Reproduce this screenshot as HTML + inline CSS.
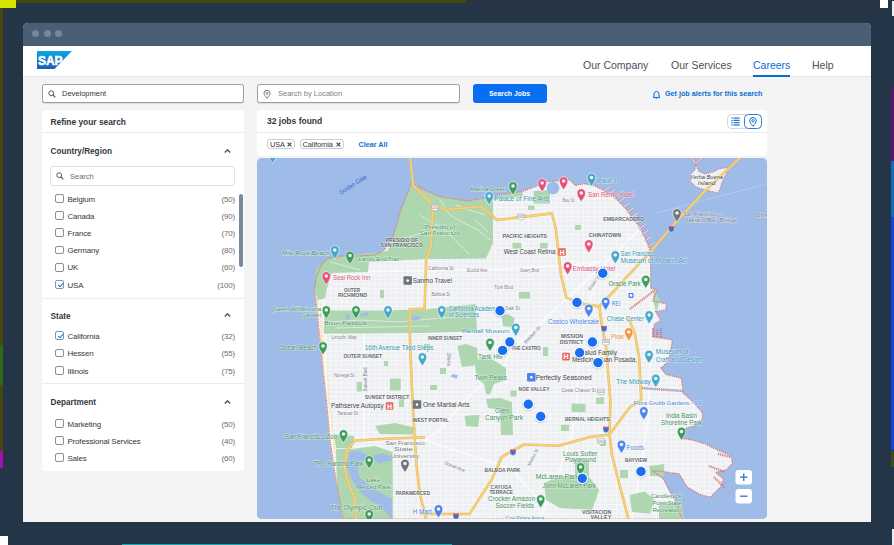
<!DOCTYPE html>
<html><head><meta charset="utf-8">
<style>
*{margin:0;padding:0;box-sizing:border-box}
html,body{width:894px;height:545px;overflow:hidden;background:#233547;font-family:"Liberation Sans",sans-serif;position:relative}
.abs{position:absolute}
#win{position:absolute;left:23px;top:23px;width:848px;height:499px;background:#f4f4f4;border-radius:5px 5px 0 0;overflow:hidden}
#tbar{position:absolute;left:0;top:0;width:848px;height:23px;background:#4a5e75}
.dot{position:absolute;top:7.3px;width:7px;height:7px;border-radius:50%;background:#74879d}
#hdr{position:absolute;left:0;top:23px;width:848px;height:31px;background:#fff;border-bottom:1px solid #e5e5e5}
.nav{position:absolute;top:13px;font-size:10.5px;color:#4b4f55;white-space:nowrap}
.inp{position:absolute;top:61px;height:19px;background:#fff;border:1px solid #9a9ea3;border-radius:2.5px;box-shadow:0 0.5px 0 #c5c8cc}
.card{position:absolute;background:#fff;border-radius:4px}
.t{position:absolute;white-space:nowrap}
.row{position:absolute;left:12px;width:181px;height:10px;font-size:7.9px;letter-spacing:-0.14px;color:#32363a}
.cb{position:absolute;left:1px;top:-0.6px;width:9px;height:8.8px;border:1px solid #8a8d92;border-radius:2px;background:#fff}
.rl{position:absolute;left:13.5px;top:0.2px;line-height:9px}
.rc{position:absolute;right:0;top:0.2px;line-height:9px;color:#6a6d70}
.sh{position:absolute;left:8.5px;font-size:8.2px;font-weight:700;color:#33373c;white-space:nowrap}
.chev{position:absolute;left:182px;width:7px;height:4px}
.ck{border-color:#7f95b3}.ck::after{content:"";position:absolute;left:2.6px;top:0.6px;width:2.2px;height:4.4px;border-right:0.9px solid #0a6ed1;border-bottom:0.9px solid #0a6ed1;transform:rotate(40deg)}
.chip{height:10px;border:1px solid #c9cdd2;border-radius:3px;font-size:7.4px;letter-spacing:-0.1px;color:#32363a;white-space:nowrap}.chip span{position:absolute;left:1.6px;top:0.2px;line-height:8px}.chip i{position:absolute;right:1.5px;top:0.3px;font-style:normal;font-size:6px;line-height:8px;color:#45484c}
.div{position:absolute;left:0;width:202px;height:1px;background:#ececec}
</style></head><body>
<!-- edge strips -->
<div class="abs" style="left:0;top:0;width:16px;height:8px;background:#d4e400"></div>
<div class="abs" style="left:16px;top:0;width:450px;height:2.5px;background:#3e4a12"></div>
<div class="abs" style="left:466px;top:0;width:414px;height:2px;background:#2b323d"></div>
<div class="abs" style="left:880px;top:0;width:8px;height:8px;background:#fff"></div>
<div class="abs" style="left:892px;top:1px;width:2px;height:15px;background:#e8eef4"></div>
<div class="abs" style="left:0;top:8px;width:3px;height:337px;background:#45470f"></div>
<div class="abs" style="left:0;top:345px;width:3px;height:40px;background:#2f6a12"></div>
<div class="abs" style="left:0;top:385px;width:3px;height:66px;background:#45470f"></div>
<div class="abs" style="left:0;top:451px;width:3px;height:17px;background:#a212a8"></div>
<div class="abs" style="left:0;top:536px;width:8px;height:9px;background:#fff"></div>
<div class="abs" style="left:122px;top:543.5px;width:330px;height:1.5px;background:#14a9b2"></div>
<div class="abs" style="left:890.5px;top:88.8px;width:3.5px;height:72px;background:#5c1670"></div>
<div class="abs" style="left:890.5px;top:160.8px;width:3.5px;height:56px;background:#0f6cb8"></div>
<div class="abs" style="left:890.5px;top:216.8px;width:3.5px;height:233.7px;background:#1242e0"></div>
<div class="abs" style="left:890.5px;top:450.5px;width:3.5px;height:16px;background:#3c4a20"></div>
<div class="abs" style="left:892px;top:529px;width:2px;height:16px;background:#e9edf1"></div>
<div id="win">
  <div id="tbar">
    <div class="dot" style="left:9px"></div>
    <div class="dot" style="left:20.5px"></div>
    <div class="dot" style="left:32px"></div>
  </div>
  <div id="hdr">
    <!-- SAP logo -->
    <svg class="abs" style="left:14px;top:5px" width="35" height="18" viewBox="0 0 35 18">
      <defs><linearGradient id="sapg" x1="0" y1="0" x2="0" y2="1"><stop offset="0" stop-color="#0aa6e8"/><stop offset="1" stop-color="#1d5cb2"/></linearGradient></defs>
      <polygon points="0,0 35,0 17.5,18 0,18" fill="url(#sapg)"/>
      <text x="1" y="14.3" font-family="Liberation Sans" font-weight="700" font-size="13.5" fill="#fff" stroke="#fff" stroke-width="0.6" textLength="24.5" lengthAdjust="spacingAndGlyphs">SAP</text>
    </svg>
    <div class="nav" style="left:560px">Our Company</div>
    <div class="nav" style="left:648px">Our Services</div>
    <div class="nav" style="left:730px;color:#0a6ed1">Careers</div>
    <div class="abs" style="left:730px;top:29px;width:37px;height:2px;background:#0a6ed1"></div>
    <div class="nav" style="left:789px">Help</div>
  </div>

  <!-- search inputs -->
  <div class="inp" style="left:19px;width:202px">
    <svg class="abs" style="left:5px;top:5px" width="8" height="8" viewBox="0 0 8 8"><circle cx="3.2" cy="3.2" r="2.4" fill="none" stroke="#55595e" stroke-width="1"/><line x1="5" y1="5" x2="7.3" y2="7.3" stroke="#55595e" stroke-width="1.1"/></svg>
    <div class="t" style="left:19px;top:4px;font-size:7.5px;color:#32363a">Development</div>
  </div>
  <div class="inp" style="left:234px;width:203px">
    <svg class="abs" style="left:5px;top:4.5px" width="8" height="9" viewBox="0 0 8 9"><path d="M4 8.3 C2 6 1 4.6 1 3.3 A3 3 0 0 1 7 3.3 C7 4.6 6 6 4 8.3Z" fill="none" stroke="#6a6d70" stroke-width="0.9"/><circle cx="4" cy="3.4" r="1" fill="none" stroke="#6a6d70" stroke-width="0.8"/></svg>
    <div class="t" style="left:20px;top:4px;font-size:7.5px;color:#7b7e82">Search by Location</div>
  </div>
  <div class="abs" style="left:450px;top:61px;width:74px;height:19px;background:#0a6ef2;border-radius:3px">
    <div class="t" style="left:16px;top:5.8px;font-size:6.9px;font-weight:700;color:#fff">Search Jobs</div>
  </div>
  <svg class="abs" style="left:629px;top:67px" width="9" height="9" viewBox="0 0 9 9"><path d="M2 6.5 V4 A2.5 2.5 0 0 1 7 4 V6.5 L8 7.4 H1 Z" fill="none" stroke="#0a6ed1" stroke-width="1"/><path d="M3.6 8.2 H5.4" stroke="#0a6ed1" stroke-width="1"/></svg>
  <div class="t" style="left:642px;top:66px;font-size:7.2px;font-weight:700;color:#0a6ed1">Get job alerts for this search</div>

  <!-- left card -->
  <div class="card" style="left:19px;top:87px;width:202px;height:361px">
    <div class="sh" style="top:7.3px;font-size:8.4px">Refine your search</div>
    <div class="div" style="top:22px"></div>
    <div class="sh" style="top:36.5px">Country/Region</div>
    <svg class="chev" style="top:38.5px" viewBox="0 0 7 4"><path d="M0.8 3.4 L3.5 0.8 L6.2 3.4" fill="none" stroke="#505458" stroke-width="1.4"/></svg>
    <div class="abs" style="left:8px;top:56px;width:185px;height:19.5px;border:1px solid #e3e3e3;border-radius:3px">
      <svg class="abs" style="left:5px;top:5px" width="8" height="8" viewBox="0 0 8 8"><circle cx="3.2" cy="3.2" r="2.4" fill="none" stroke="#55595e" stroke-width="1"/><line x1="5" y1="5" x2="7.3" y2="7.3" stroke="#55595e" stroke-width="1.1"/></svg>
      <div class="t" style="left:19px;top:4.5px;font-size:7.5px;color:#6a6d70">Search</div>
    </div>
    <div class="abs" style="left:197px;top:84.3px;width:4px;height:72.3px;background:#778a9e;border-radius:2px"></div>
    <div class="row" style="top:84.5px"><div class="cb"></div><div class="rl">Belgium</div><div class="rc">(50)</div></div>
    <div class="row" style="top:101.7px"><div class="cb"></div><div class="rl">Canada</div><div class="rc">(90)</div></div>
    <div class="row" style="top:118.9px"><div class="cb"></div><div class="rl">France</div><div class="rc">(70)</div></div>
    <div class="row" style="top:136.1px"><div class="cb"></div><div class="rl">Germany</div><div class="rc">(80)</div></div>
    <div class="row" style="top:153.3px"><div class="cb"></div><div class="rl">UK</div><div class="rc">(60)</div></div>
    <div class="row" style="top:170.5px"><div class="cb ck"></div><div class="rl">USA</div><div class="rc">(100)</div></div>
    <div class="div" style="top:187.5px"></div>
    <div class="sh" style="top:201.6px">State</div>
    <svg class="chev" style="top:202.8px" viewBox="0 0 7 4"><path d="M0.8 3.4 L3.5 0.8 L6.2 3.4" fill="none" stroke="#505458" stroke-width="1.4"/></svg>
    <div class="row" style="top:222px"><div class="cb ck"></div><div class="rl">California</div><div class="rc">(32)</div></div>
    <div class="row" style="top:239.2px"><div class="cb"></div><div class="rl">Hessen</div><div class="rc">(55)</div></div>
    <div class="row" style="top:256.4px"><div class="cb"></div><div class="rl">Illinois</div><div class="rc">(75)</div></div>
    <div class="div" style="top:273.4px"></div>
    <div class="sh" style="top:288.3px">Department</div>
    <svg class="chev" style="top:289.6px" viewBox="0 0 7 4"><path d="M0.8 3.4 L3.5 0.8 L6.2 3.4" fill="none" stroke="#505458" stroke-width="1.4"/></svg>
    <div class="row" style="top:309.6px"><div class="cb"></div><div class="rl">Marketing</div><div class="rc">(50)</div></div>
    <div class="row" style="top:326.8px"><div class="cb"></div><div class="rl">Professional Services</div><div class="rc">(40)</div></div>
    <div class="row" style="top:344px"><div class="cb"></div><div class="rl">Sales</div><div class="rc">(60)</div></div>
  </div>

  <!-- jobs card -->
  <div class="card" style="left:234px;top:87px;width:510px;height:46px">
    <div class="t" style="left:10px;top:6.4px;font-size:8.5px;font-weight:700;color:#33373c">32 jobs found</div>
    <div class="div" style="top:22px;width:510px"></div>
    <div class="abs chip" style="left:10.4px;top:29.4px;width:28px"><span>USA</span><svg style="position:absolute;right:2.2px;top:2px" width="5" height="5" viewBox="0 0 5 5"><path d="M0.6 0.6 L4.4 4.4 M4.4 0.6 L0.6 4.4" stroke="#3d4045" stroke-width="1.05"/></svg></div>
    <div class="abs chip" style="left:43px;top:29.4px;width:44px"><span>California</span><svg style="position:absolute;right:2.2px;top:2px" width="5" height="5" viewBox="0 0 5 5"><path d="M0.6 0.6 L4.4 4.4 M4.4 0.6 L0.6 4.4" stroke="#3d4045" stroke-width="1.05"/></svg></div>
    <div class="t" style="left:101.5px;top:30px;font-size:7.2px;font-weight:700;color:#0a6ed1">Clear All</div>
    <div class="abs" style="left:470.4px;top:4px;width:34.5px;height:15px;border:1px solid #cfd6e0;border-radius:4.5px"></div>
    <svg class="abs" style="left:474px;top:7px" width="10" height="9" viewBox="0 0 10 9"><g fill="#0a6ed1"><circle cx="1" cy="1.1" r="0.75"/><circle cx="1" cy="3.4" r="0.75"/><circle cx="1" cy="5.7" r="0.75"/><circle cx="1" cy="8" r="0.75"/><rect x="2.6" y="0.5" width="6" height="1.15"/><rect x="2.6" y="2.8" width="6" height="1.15"/><rect x="2.6" y="5.1" width="6" height="1.15"/><rect x="2.6" y="7.4" width="6" height="1.15"/></g></svg>
    <div class="abs" style="left:487.3px;top:4px;width:17.6px;height:15px;border:1px solid #2f7fd6;border-radius:4.5px;background:#fff"></div>
    <svg class="abs" style="left:492px;top:6.5px" width="8" height="10" viewBox="0 0 8 10"><path d="M4 9.2 C1.8 6.8 0.7 5.2 0.7 3.8 A3.3 3.3 0 0 1 7.3 3.8 C7.3 5.2 6.2 6.8 4 9.2Z" fill="none" stroke="#0a6ed1" stroke-width="1"/><circle cx="4" cy="3.8" r="1.2" fill="none" stroke="#0a6ed1" stroke-width="0.9"/></svg>
  </div>

  <!-- map -->
  <div id="map" class="abs" style="left:234px;top:135px;width:510px;height:361px;border-radius:5px;overflow:hidden;background:#9fbbe8">
<svg class="abs" style="left:0;top:0" width="510" height="361" viewBox="257 158 510 361">
<rect x="257" y="158" width="510" height="361" fill="#9fbbe8"/>
<polygon points="343,519 336,480 330,440 326.5,400 323,370 320,340 317,310 314.5,290 316,278 319,270 322,264 327.7,258.5 343,256 360,256 374,255 380,252.5 385,249.2 393.2,236 399.8,212.9 411.4,183.2 413,183.2 420,188 440,196.8 467.5,201 486,197.5 495,195.4 522.5,191.3 536,186.2 547,181.5 562.6,180.7 570.5,180 575,185.4 584.6,183.8 594,185.4 601.8,189.3 614.3,197 625.3,208 634.7,220.6 640,227 649.4,247.4 650.6,262.6 650.6,288.3 657,289.6 653,301 666,303.7 666,310 655.7,311.4 660.8,320.4 654.4,324.3 653,337 663.4,338.4 672.4,339.7 671,348.7 668.6,361.5 660.8,368 666,374.4 681.4,378.3 682.7,388.5 683,393 692,400.8 702.5,412.6 702.5,419 696,425.6 685.6,428.2 683,438.6 692,440 705,443.8 718,450.3 731,455.6 732.5,463.4 726,469.9 715.6,472.5 723.4,479 720.8,486.8 710.3,497.2 700,494.6 687,486.8 679,473.8 660.8,471.2 653,471.2 663.4,479 668.7,489.4 676.5,502.5 681.7,519" fill="#edeff2"/>
<polygon points="695.7,163.3 694.9,169.9 690.7,174 690.7,181.4 696.5,187.2 704.8,189.7 718,193 720.5,188 722,182.3 726.2,174 727,167.4 718.8,169 712.2,172.3 704.8,174 699,171.5 696.5,166.6" fill="#edeff2"/>
<polyline points="317,290 319,310 322,340 325,370 328.5,400 332,440 338,480 345,519" fill="none" stroke="#f3e7c8" stroke-width="5"/>
<defs><pattern id="grid" width="5.5" height="4.5" patternUnits="userSpaceOnUse"><path d="M0 0.4H5.5M0.4 0V4.5" stroke="#f8f9fa" stroke-width="0.8"/></pattern><clipPath id="landclip"><polygon points="343,519 336,480 330,440 326.5,400 323,370 320,340 317,310 314.5,290 316,278 319,270 322,264 327.7,258.5 343,256 360,256 374,255 380,252.5 385,249.2 393.2,236 399.8,212.9 411.4,183.2 413,183.2 420,188 440,196.8 467.5,201 486,197.5 495,195.4 522.5,191.3 536,186.2 547,181.5 562.6,180.7 570.5,180 575,185.4 584.6,183.8 594,185.4 601.8,189.3 614.3,197 625.3,208 634.7,220.6 640,227 649.4,247.4 650.6,262.6 650.6,288.3 657,289.6 653,301 666,303.7 666,310 655.7,311.4 660.8,320.4 654.4,324.3 653,337 663.4,338.4 672.4,339.7 671,348.7 668.6,361.5 660.8,368 666,374.4 681.4,378.3 682.7,388.5 683,393 692,400.8 702.5,412.6 702.5,419 696,425.6 685.6,428.2 683,438.6 692,440 705,443.8 718,450.3 731,455.6 732.5,463.4 726,469.9 715.6,472.5 723.4,479 720.8,486.8 710.3,497.2 700,494.6 687,486.8 679,473.8 660.8,471.2 653,471.2 663.4,479 668.7,489.4 676.5,502.5 681.7,519"/></clipPath></defs>
<rect x="257" y="158" width="510" height="361" fill="url(#grid)" clip-path="url(#landclip)"/>
<polyline points="645,224 600,268 560,305 520,342 510,352 505,365" fill="none" stroke="#fbfbfc" stroke-width="1.6" clip-path="url(#landclip)"/>
<polyline points="330,272 420,271 500,269 560,266 600,262" fill="none" stroke="#fbfbfc" stroke-width="1.6" clip-path="url(#landclip)"/>
<polyline points="323,334 400,333 476,332 520,331" fill="none" stroke="#fbfbfc" stroke-width="1.6" clip-path="url(#landclip)"/>
<polyline points="364,334 364,438" fill="none" stroke="#fbfbfc" stroke-width="1.6" clip-path="url(#landclip)"/>
<polyline points="322,260 327,400 335,470 342,519" fill="none" stroke="#fbfbfc" stroke-width="1.6" clip-path="url(#landclip)"/>
<polyline points="600,268 585,320 578,360 576,420 560,470 540,519" fill="none" stroke="#fbfbfc" stroke-width="1.6" clip-path="url(#landclip)"/>
<polyline points="652,300 650,360 648,420 640,470 632,519" fill="none" stroke="#fbfbfc" stroke-width="1.6" clip-path="url(#landclip)"/>
<polyline points="425,440 470,455 510,468 540,500" fill="none" stroke="#fbfbfc" stroke-width="1.6" clip-path="url(#landclip)"/>
<polyline points="505,365 470,395 440,430 426,440" fill="none" stroke="#fbfbfc" stroke-width="1.6" clip-path="url(#landclip)"/>
<polyline points="561,275 600,262" fill="none" stroke="#fbfbfc" stroke-width="1.6" clip-path="url(#landclip)"/>
<polygon points="411.4,183.2 413,183.2 420,188 440,196.8 467.5,201 486,197.5 493,196 493,243 486,258.5 446,259 426,259 400,257 387,252 393.2,236 399.8,212.9" fill="#aed7b1"/>
<polygon points="327.7,258.5 343,256 360,254 387,251 426,259 369,262 368,272 332,273 327,288 325.2,298.2 317.8,300 314.2,287.2 316,270.7 319,266" fill="#aed7b1"/>
<polygon points="493,196 522.5,191.3 523,196 493,200" fill="#aed7b1"/>
<polygon points="533.7,191 550,190 550,203.4 533.7,203.4" fill="#aed7b1"/>
<polygon points="324,310.5 380,310.5 425,309.5 475.6,304 477,331.5 425,333 324,333.8" fill="#aed7b1"/>
<polygon points="501.5,316 508,314 514.7,318 513,327.3 503,326" fill="#aed7b1"/>
<polygon points="457.4,346 466,344 477.3,348 478,365 462,367" fill="#aed7b1"/>
<polygon points="474,360 490,358 506,368 506,380 494,384 490,394.6 486,394 484,384 477,378" fill="#aed7b1"/>
<polygon points="486,399 500,398 512,402 512,407 513,435 501,435 500,410 488,408" fill="#aed7b1"/>
<polygon points="464.6,416 479.5,414.7 478,427 466,426" fill="#aed7b1"/>
<polygon points="375,426 395,423 416,428 414,434.5 380,434" fill="#aed7b1"/>
<polygon points="334,434.5 354.5,436 352,448 336,448" fill="#aed7b1"/>
<polygon points="336,449 354,448.8 375,446 392.5,452 393,519 343,519 337,490" fill="#aed7b1"/>
<polygon points="544.3,483 560,476 590,478 599.2,490 592,510 560,508 546,500" fill="#aed7b1"/>
<polygon points="575,458.5 589,460 589,479 575,477" fill="#aed7b1"/>
<polygon points="629.6,495 645,491.5 654.4,500 650,513.7 632,512" fill="#aed7b1"/>
<polygon points="649.4,466 664.3,464 664,476.6 650,476" fill="#aed7b1"/>
<polygon points="659,503 681.6,501 684,518.7 659,518.7" fill="#aed7b1"/>
<polygon points="543,347 548,347 548,356 543,356" fill="#aed7b1"/>
<polygon points="510.6,390.5 516.7,390.5 516.7,396.6 510.6,396.6" fill="#aed7b1"/>
<polygon points="561,424.8 569,424.8 569,431 561,431" fill="#aed7b1"/>
<polygon points="596,398 604,397 604,404 596,404" fill="#aed7b1"/>
<polygon points="600,440 606,440 606,446 600,446" fill="#aed7b1"/>
<polygon points="620,470 628,470 628,478 620,478" fill="#aed7b1"/>
<polygon points="512.5,243 521.3,243 521.3,248.6 512.5,248.6" fill="#aed7b1"/>
<polygon points="540,243 547.7,243 547.7,248.6 540,248.6" fill="#aed7b1"/>
<polygon points="528,205.6 534.5,205.6 534.5,210 528,210" fill="#aed7b1"/>
<polygon points="575,225 581,225 581,230 575,230" fill="#aed7b1"/>
<polygon points="605,350 610,350 610,356 605,356" fill="#aed7b1"/>
<polygon points="380,290 384,290 384,298 380,298" fill="#aed7b1"/>
<polygon points="390,378.6 400.7,378.6 400.7,390.5 390,390.5" fill="#aed7b1"/>
<polygon points="356.7,382 362,382 362,391.5 356.7,391.5" fill="#aed7b1"/>
<polygon points="384,361 388,361 388,366 384,366" fill="#aed7b1"/>
<polygon points="399,399 404,399 404,407 399,407" fill="#aed7b1"/>
<polygon points="430,385 437,385 437,390 430,390" fill="#aed7b1"/>
<polygon points="440,368 446,368 446,374 440,374" fill="#aed7b1"/>
<polygon points="424,344 430,344 430,350 424,350" fill="#aed7b1"/>
<polygon points="571.7,403.6 585.5,404 585.5,412.2 571.7,412" fill="#aed7b1"/>
<polygon points="519,292 530,292 530,298.6 519,298.6" fill="#aed7b1"/>
<polygon points="654,290 660,300 656,312 653,300" fill="#aed7b1"/>
<polyline points="440,200 450,215 462,222 478,230 490,240" fill="none" stroke="#e6f2e6" stroke-width="0.7"/>
<polyline points="420,215 445,230 460,245 470,255" fill="none" stroke="#e6f2e6" stroke-width="0.7"/>
<polyline points="455,205 470,210 485,215" fill="none" stroke="#e6f2e6" stroke-width="0.7"/>
<polyline points="400,240 415,235 425,232" fill="none" stroke="#e6f2e6" stroke-width="0.7"/>
<polyline points="330,262 345,266 360,270" fill="none" stroke="#e6f2e6" stroke-width="0.7"/>
<polyline points="330,322 360,320 400,322 440,318 470,316" fill="none" stroke="#e6f2e6" stroke-width="0.7"/>
<polyline points="335,328 380,327 430,326" fill="none" stroke="#e6f2e6" stroke-width="0.7"/>
<polyline points="475,220 488,232" fill="none" stroke="#e6f2e6" stroke-width="0.7"/>
<polygon points="349.7,451.7 358.5,450.3 368.7,456.1 357,469.3 360,478 373.1,488.4 384.9,495.7 392,499 392,519 389.3,516.3 383.4,509 371.7,501.6 360,491.3 352.6,481 346.7,466.4" fill="#9fbbe8"/>
<polygon points="374.6,454.7 382,453.2 390.7,456.1 392.2,460.5 379,463.5 373.1,459" fill="#9fbbe8"/>
<polygon points="345,316 348,314 350,318 347,320" fill="#9fbbe8"/>
<polygon points="360,314 368,312.5 369,315 361,316.5" fill="#9fbbe8"/>
<polygon points="412,317 420,316 419,320 413,321" fill="#9fbbe8"/>
<polygon points="452,374 457.6,375 457,378.6 451,377" fill="#9fbbe8"/>
<circle cx="553" cy="188" r="6.3" fill="#9fbbe8"/>
<path d="M640 388 L683 391" stroke="#d7787d" stroke-width="2.4" stroke-dasharray="1.2 0.9"/><path d="M640 388 L683 391" stroke="#9fbbe8" stroke-width="1.2"/>
<polygon points="343,519 336,480 330,440 326.5,400 323,370 320,340 317,310 314.5,290 316,278 319,270 322,264 327.7,258.5 343,256 360,256 374,255 380,252.5 385,249.2 393.2,236 399.8,212.9 411.4,183.2 413,183.2 420,188 440,196.8 467.5,201 486,197.5 495,195.4 522.5,191.3 536,186.2 547,181.5 562.6,180.7 570.5,180 575,185.4 584.6,183.8 594,185.4 601.8,189.3 614.3,197 625.3,208 634.7,220.6 640,227 649.4,247.4 650.6,262.6 650.6,288.3 657,289.6 653,301 666,303.7 666,310 655.7,311.4 660.8,320.4 654.4,324.3 653,337 663.4,338.4 672.4,339.7 671,348.7 668.6,361.5 660.8,368 666,374.4 681.4,378.3 682.7,388.5 683,393 692,400.8 702.5,412.6 702.5,419 696,425.6 685.6,428.2 683,438.6 692,440 705,443.8 718,450.3 731,455.6 732.5,463.4 726,469.9 715.6,472.5 723.4,479 720.8,486.8 710.3,497.2 700,494.6 687,486.8 679,473.8 660.8,471.2 653,471.2 663.4,479 668.7,489.4 676.5,502.5 681.7,519" fill="none" stroke="#d7787d" stroke-width="1.2" stroke-dasharray="1.3 0.9"/>
<polygon points="695.7,163.3 694.9,169.9 690.7,174 690.7,181.4 696.5,187.2 704.8,189.7 718,193 720.5,188 722,182.3 726.2,174 727,167.4 718.8,169 712.2,172.3 704.8,174 699,171.5 696.5,166.6" fill="none" stroke="#d7787d" stroke-width="1" stroke-dasharray="1.3 0.9"/>
<path d="M604 191 l6 -4.5" stroke="#d7787d" stroke-width="2.2" stroke-dasharray="1.1 0.8" />
<path d="M604 191 l6 -4.5" stroke="#edeff2" stroke-width="1" />
<path d="M609 194 l6 -4.5" stroke="#d7787d" stroke-width="2.2" stroke-dasharray="1.1 0.8" />
<path d="M609 194 l6 -4.5" stroke="#edeff2" stroke-width="1" />
<path d="M614 198 l6 -4.5" stroke="#d7787d" stroke-width="2.2" stroke-dasharray="1.1 0.8" />
<path d="M614 198 l6 -4.5" stroke="#edeff2" stroke-width="1" />
<path d="M619 202 l6 -4.5" stroke="#d7787d" stroke-width="2.2" stroke-dasharray="1.1 0.8" />
<path d="M619 202 l6 -4.5" stroke="#edeff2" stroke-width="1" />
<path d="M624 207 l6 -4.5" stroke="#d7787d" stroke-width="2.2" stroke-dasharray="1.1 0.8" />
<path d="M624 207 l6 -4.5" stroke="#edeff2" stroke-width="1" />
<path d="M628 212 l6 -4.5" stroke="#d7787d" stroke-width="2.2" stroke-dasharray="1.1 0.8" />
<path d="M628 212 l6 -4.5" stroke="#edeff2" stroke-width="1" />
<path d="M632 217 l6 -4.5" stroke="#d7787d" stroke-width="2.2" stroke-dasharray="1.1 0.8" />
<path d="M632 217 l6 -4.5" stroke="#edeff2" stroke-width="1" />
<path d="M636 223 l6 -4.5" stroke="#d7787d" stroke-width="2.2" stroke-dasharray="1.1 0.8" />
<path d="M636 223 l6 -4.5" stroke="#edeff2" stroke-width="1" />
<path d="M639 229 l6 -4.5" stroke="#d7787d" stroke-width="2.2" stroke-dasharray="1.1 0.8" />
<path d="M639 229 l6 -4.5" stroke="#edeff2" stroke-width="1" />
<path d="M642 235 l6 -4.5" stroke="#d7787d" stroke-width="2.2" stroke-dasharray="1.1 0.8" />
<path d="M642 235 l6 -4.5" stroke="#edeff2" stroke-width="1" />
<path d="M645 241 l6 -4.5" stroke="#d7787d" stroke-width="2.2" stroke-dasharray="1.1 0.8" />
<path d="M645 241 l6 -4.5" stroke="#edeff2" stroke-width="1" />
<path d="M648 247 l6 -4.5" stroke="#d7787d" stroke-width="2.2" stroke-dasharray="1.1 0.8" />
<path d="M648 247 l6 -4.5" stroke="#edeff2" stroke-width="1" />
<path d="M653 337 l0 -9" stroke="#d7787d" stroke-width="2.2" stroke-dasharray="1.1 0.8" />
<path d="M657 337 l0 -8" stroke="#d7787d" stroke-width="2.2" stroke-dasharray="1.1 0.8" />
<path d="M661 337 l0 -9" stroke="#d7787d" stroke-width="2.2" stroke-dasharray="1.1 0.8" />
<path d="M630 309 l25 -19" stroke="#d7787d" stroke-width="2.2" stroke-dasharray="1.1 0.8" />
<path d="M718 454 l13 3" stroke="#d7787d" stroke-width="2.2" stroke-dasharray="1.1 0.8" />
<path d="M709 466 l16 6" stroke="#d7787d" stroke-width="2.2" stroke-dasharray="1.1 0.8" />
<path d="M714 477 l11 11" stroke="#d7787d" stroke-width="2.2" stroke-dasharray="1.1 0.8" />
<path d="M690.7 157 L695.7 163.3 L703 157" fill="none" stroke="#d7787d" stroke-width="2.2" stroke-dasharray="1.1 0.8"/><path d="M690.7 157 L695.7 163.3 L703 157" fill="none" stroke="#edeff2" stroke-width="1"/>
<path d="M656 213 L770 183" stroke="#c4d4f0" stroke-width="0.6"/>
<polyline points="409.5,150 411.4,170 413,184.9 424,196 432.8,204.7 431.2,246 426.2,259 424.6,308.6 409.6,309.2 410,340 412,390 414.5,438 417,470 420,495 426.5,520" fill="none" stroke="#e9b859" stroke-width="2.6" stroke-linejoin="round"/>
<polyline points="432.8,204.7 445,209.5 481.7,206.8 497,220 552,213.4 556,230 561,275 566.4,297.6 584,304.2 599.4,306.4 601.6,324 606,346 610.4,400 609.5,434.5 612,455 619.8,486 630,525" fill="none" stroke="#e9b859" stroke-width="2.6" stroke-linejoin="round"/>
<polyline points="425,437.2 380,439 354.6,440.7 347.6,449.4 344.2,465 347.6,480.7 354.6,498.2 356.4,525" fill="none" stroke="#e9b859" stroke-width="2.6" stroke-linejoin="round"/>
<polyline points="746,152 704.8,191.1 671.4,227 650.8,251.5 627.7,275.9 616,289 599.4,306.4" fill="none" stroke="#e9b859" stroke-width="2.6" stroke-linejoin="round"/>
<polyline points="628,317.4 634.7,332.8 639,357 641.3,400 630,407 609.5,434.5" fill="none" stroke="#e9b859" stroke-width="2.6" stroke-linejoin="round"/>
<polyline points="420,514 469.6,513.9 491.9,479.2 501.8,456.9 524,444.5 558.8,445.7 590,437 609.5,434.5" fill="none" stroke="#e9b859" stroke-width="2.6" stroke-linejoin="round"/>
<polyline points="409.5,150 411.4,170 413,184.9 424,196 432.8,204.7 431.2,246 426.2,259 424.6,308.6 409.6,309.2 410,340 412,390 414.5,438 417,470 420,495 426.5,520" fill="none" stroke="#f6d27a" stroke-width="1.6" stroke-linejoin="round"/>
<polyline points="432.8,204.7 445,209.5 481.7,206.8 497,220 552,213.4 556,230 561,275 566.4,297.6 584,304.2 599.4,306.4 601.6,324 606,346 610.4,400 609.5,434.5 612,455 619.8,486 630,525" fill="none" stroke="#f6d27a" stroke-width="1.6" stroke-linejoin="round"/>
<polyline points="425,437.2 380,439 354.6,440.7 347.6,449.4 344.2,465 347.6,480.7 354.6,498.2 356.4,525" fill="none" stroke="#f6d27a" stroke-width="1.6" stroke-linejoin="round"/>
<polyline points="746,152 704.8,191.1 671.4,227 650.8,251.5 627.7,275.9 616,289 599.4,306.4" fill="none" stroke="#f6d27a" stroke-width="1.6" stroke-linejoin="round"/>
<polyline points="628,317.4 634.7,332.8 639,357 641.3,400 630,407 609.5,434.5" fill="none" stroke="#f6d27a" stroke-width="1.6" stroke-linejoin="round"/>
<polyline points="420,514 469.6,513.9 491.9,479.2 501.8,456.9 524,444.5 558.8,445.7 590,437 609.5,434.5" fill="none" stroke="#f6d27a" stroke-width="1.6" stroke-linejoin="round"/>
<g font-family="Liberation Sans">
<text x="385.7" y="241.9" font-size="5.2" font-weight="700" fill="#62666b" textLength="32.3" lengthAdjust="spacingAndGlyphs" stroke="#fff" stroke-width="1" stroke-opacity="0.6" paint-order="stroke" >PRESIDIO OF</text>
<text x="380.6" y="247.4" font-size="5.2" font-weight="700" fill="#62666b" textLength="42.4" lengthAdjust="spacingAndGlyphs" stroke="#fff" stroke-width="1" stroke-opacity="0.6" paint-order="stroke" >SAN FRANCISCO</text>
<text x="424.7" y="228.5" font-size="6" font-weight="400" fill="#3f8f5c" textLength="30.6" lengthAdjust="spacingAndGlyphs" stroke="#fff" stroke-width="1" stroke-opacity="0.6" paint-order="stroke" >Presidio of</text>
<text x="419.6" y="234.6" font-size="6" font-weight="400" fill="#3f8f5c" textLength="40.8" lengthAdjust="spacingAndGlyphs" stroke="#fff" stroke-width="1" stroke-opacity="0.6" paint-order="stroke" >San Francisco</text>
<text x="282" y="254.6" font-size="6.2" font-weight="400" fill="#3f8f5c" textLength="47.7" lengthAdjust="spacingAndGlyphs" stroke="#fff" stroke-width="1" stroke-opacity="0.6" paint-order="stroke" >Mile Rock Beach</text>
<text x="358.5" y="260.7" font-size="6.2" font-weight="400" fill="#3f8f5c" textLength="40.8" lengthAdjust="spacingAndGlyphs" stroke="#fff" stroke-width="1" stroke-opacity="0.6" paint-order="stroke" >Lands End Trail</text>
<text x="333" y="280.2" font-size="6.5" font-weight="400" fill="#df4f74" textLength="37.4" lengthAdjust="spacingAndGlyphs" stroke="#fff" stroke-width="1" stroke-opacity="0.6" paint-order="stroke" >Seal Rock Inn</text>
<text x="344" y="291.7" font-size="5.2" font-weight="700" fill="#62666b" textLength="16.0" lengthAdjust="spacingAndGlyphs" stroke="#fff" stroke-width="1" stroke-opacity="0.6" paint-order="stroke" >OUTER</text>
<text x="338" y="296.7" font-size="5.2" font-weight="700" fill="#62666b" textLength="29.0" lengthAdjust="spacingAndGlyphs" stroke="#fff" stroke-width="1" stroke-opacity="0.6" paint-order="stroke" >RICHMOND</text>
<text x="412.8" y="283.0" font-size="6.8" font-weight="400" fill="#3c4043" textLength="39.2" lengthAdjust="spacingAndGlyphs" stroke="#fff" stroke-width="1" stroke-opacity="0.6" paint-order="stroke" >Sanmo Travel</text>
<text x="428" y="269.7" font-size="4.6" font-weight="400" fill="#7c8086" textLength="25.6" lengthAdjust="spacingAndGlyphs" stroke="#fff" stroke-width="1" stroke-opacity="0.6" paint-order="stroke" >California St</text>
<text x="431.5" y="295.9" font-size="4.6" font-weight="400" fill="#7c8086" textLength="18.5" lengthAdjust="spacingAndGlyphs" stroke="#fff" stroke-width="1" stroke-opacity="0.6" paint-order="stroke" >Balboa St</text>
<text x="467" y="272.1" font-size="4.6" font-weight="400" fill="#7c8086" textLength="20.5" lengthAdjust="spacingAndGlyphs" stroke="#fff" stroke-width="1" stroke-opacity="0.6" paint-order="stroke" >Euclid Ave</text>
<text x="494.3" y="289.1" font-size="4.6" font-weight="400" fill="#7c8086" textLength="18.7" lengthAdjust="spacingAndGlyphs" stroke="#fff" stroke-width="1" stroke-opacity="0.6" paint-order="stroke" >Turk Blvd</text>
<text x="520" y="271.7" font-size="4.6" font-weight="400" fill="#7c8086" textLength="19.0" lengthAdjust="spacingAndGlyphs" stroke="#fff" stroke-width="1" stroke-opacity="0.6" paint-order="stroke" >Geary Blvd</text>
<text x="270.3" y="310.6" font-size="6.2" font-weight="400" fill="#3f8f5c" textLength="50.9" lengthAdjust="spacingAndGlyphs" stroke="#fff" stroke-width="1" stroke-opacity="0.6" paint-order="stroke" >Queen Wilhelmina</text>
<text x="300.8" y="316.7" font-size="6.2" font-weight="400" fill="#3f8f5c" textLength="20.4" lengthAdjust="spacingAndGlyphs" stroke="#fff" stroke-width="1" stroke-opacity="0.6" paint-order="stroke" >Garden</text>
<text x="448.5" y="310.7" font-size="6.5" font-weight="400" fill="#2f95b2" textLength="47.5" lengthAdjust="spacingAndGlyphs" stroke="#fff" stroke-width="1" stroke-opacity="0.6" paint-order="stroke" >California Academ</text>
<text x="505" y="309.7" font-size="4.8" font-weight="400" fill="#7c8086" textLength="15.0" lengthAdjust="spacingAndGlyphs" stroke="#fff" stroke-width="1" stroke-opacity="0.6" paint-order="stroke" >Oak St</text>
<text x="448.5" y="316.8" font-size="6.5" font-weight="400" fill="#2f95b2" textLength="30.5" lengthAdjust="spacingAndGlyphs" stroke="#fff" stroke-width="1" stroke-opacity="0.6" paint-order="stroke" >of Sciences</text>
<text x="324.6" y="325.2" font-size="6.2" font-weight="400" fill="#3f8f5c" textLength="42.4" lengthAdjust="spacingAndGlyphs" stroke="#fff" stroke-width="1" stroke-opacity="0.6" paint-order="stroke" >Bison Paddock</text>
<text x="462" y="333.0" font-size="6.2" font-weight="400" fill="#2f95b2" textLength="47.6" lengthAdjust="spacingAndGlyphs" stroke="#fff" stroke-width="1" stroke-opacity="0.6" paint-order="stroke" >Randall Museum</text>
<text x="428" y="340.2" font-size="5.2" font-weight="700" fill="#62666b" textLength="34.0" lengthAdjust="spacingAndGlyphs" stroke="#fff" stroke-width="1" stroke-opacity="0.6" paint-order="stroke" >INNER SUNSET</text>
<text x="331.4" y="339.0" font-size="4.6" font-weight="400" fill="#7c8086" textLength="25.6" lengthAdjust="spacingAndGlyphs" stroke="#fff" stroke-width="1" stroke-opacity="0.6" paint-order="stroke" >Lincoln Way</text>
<text x="470.5" y="191.2" font-size="6.2" font-weight="400" fill="#3f8f5c" textLength="35.5" lengthAdjust="spacingAndGlyphs" stroke="#fff" stroke-width="1" stroke-opacity="0.6" paint-order="stroke" >Marina Green</text>
<text x="494.3" y="201.3" font-size="6.5" font-weight="400" fill="#2f95b2" textLength="54.7" lengthAdjust="spacingAndGlyphs" stroke="#fff" stroke-width="1" stroke-opacity="0.6" paint-order="stroke" >Palace of Fine Arts</text>
<text x="588" y="197.3" font-size="6.5" font-weight="400" fill="#df4f74" textLength="46.0" lengthAdjust="spacingAndGlyphs" stroke="#fff" stroke-width="1" stroke-opacity="0.6" paint-order="stroke" >San Remo Hotel</text>
<text x="597.6" y="182.7" font-size="6.2" font-weight="400" fill="#2f95b2" textLength="21.7" lengthAdjust="spacingAndGlyphs" stroke="#fff" stroke-width="1" stroke-opacity="0.6" paint-order="stroke" >PIER 39</text>
<text x="562.6" y="201.7" font-size="4.6" font-weight="400" fill="#7c8086" textLength="11.9" lengthAdjust="spacingAndGlyphs" stroke="#fff" stroke-width="1" stroke-opacity="0.6" paint-order="stroke" >Bay St</text>
<text x="502.6" y="237.9" font-size="5.2" font-weight="700" fill="#62666b" textLength="44.4" lengthAdjust="spacingAndGlyphs" stroke="#fff" stroke-width="1" stroke-opacity="0.6" paint-order="stroke" >PACIFIC HEIGHTS</text>
<text x="503.7" y="254.4" font-size="6.8" font-weight="400" fill="#3c4043" textLength="51.7" lengthAdjust="spacingAndGlyphs" stroke="#fff" stroke-width="1" stroke-opacity="0.6" paint-order="stroke" >West Coast Retina</text>
<text x="588.8" y="237.3" font-size="5.2" font-weight="700" fill="#62666b" textLength="32.2" lengthAdjust="spacingAndGlyphs" stroke="#fff" stroke-width="1" stroke-opacity="0.6" paint-order="stroke" >CHINATOWN</text>
<text x="603.3" y="220.7" font-size="5.2" font-weight="700" fill="#62666b" textLength="40.7" lengthAdjust="spacingAndGlyphs" stroke="#fff" stroke-width="1" stroke-opacity="0.6" paint-order="stroke" >EMBARCADERO</text>
<text x="690" y="179.1" font-size="5.8" font-weight="400" fill="#3c4043" textLength="33.0" lengthAdjust="spacingAndGlyphs" stroke="#fff" stroke-width="1" stroke-opacity="0.6" paint-order="stroke" font-style="italic">Yerba Buena</text>
<text x="697.8" y="185.3" font-size="5.8" font-weight="400" fill="#3c4043" textLength="17.6" lengthAdjust="spacingAndGlyphs" stroke="#fff" stroke-width="1" stroke-opacity="0.6" paint-order="stroke" font-style="italic">Island</text>
<text x="683.5" y="216.2" font-size="6" font-weight="400" fill="#767b80" textLength="38.5" lengthAdjust="spacingAndGlyphs" stroke="#fff" stroke-width="1" stroke-opacity="0.6" paint-order="stroke" >San Francisco –</text>
<text x="683.5" y="222.2" font-size="6" font-weight="400" fill="#767b80" textLength="53.9" lengthAdjust="spacingAndGlyphs" stroke="#fff" stroke-width="1" stroke-opacity="0.6" paint-order="stroke" >Oakland Bay Bridge</text>
<text x="755" y="216.6" font-size="6" font-weight="400" fill="#767b80" textLength="13.0" lengthAdjust="spacingAndGlyphs" stroke="#fff" stroke-width="1" stroke-opacity="0.6" paint-order="stroke" >Obs</text>
<text x="620.8" y="256.3" font-size="6.5" font-weight="400" fill="#2f95b2" textLength="35.2" lengthAdjust="spacingAndGlyphs" stroke="#fff" stroke-width="1" stroke-opacity="0.6" paint-order="stroke" >San Francisco</text>
<text x="620.8" y="262.9" font-size="6.5" font-weight="400" fill="#2f95b2" textLength="66.0" lengthAdjust="spacingAndGlyphs" stroke="#fff" stroke-width="1" stroke-opacity="0.6" paint-order="stroke" >Museum of Modern Art</text>
<text x="572.8" y="271.1" font-size="6.8" font-weight="400" fill="#df4f74" textLength="42.4" lengthAdjust="spacingAndGlyphs" stroke="#fff" stroke-width="1" stroke-opacity="0.6" paint-order="stroke" >Embassy Hotel</text>
<text x="608.4" y="285.6" font-size="6.5" font-weight="400" fill="#3f8f5c" textLength="32.3" lengthAdjust="spacingAndGlyphs" stroke="#fff" stroke-width="1" stroke-opacity="0.6" paint-order="stroke" >Oracle Park</text>
<text x="611.8" y="306.0" font-size="6.5" font-weight="400" fill="#4a7fe6" textLength="8.5" lengthAdjust="spacingAndGlyphs" stroke="#fff" stroke-width="1" stroke-opacity="0.6" paint-order="stroke" >REI</text>
<text x="548" y="323.6" font-size="6.5" font-weight="400" fill="#4a7fe6" textLength="51.0" lengthAdjust="spacingAndGlyphs" stroke="#fff" stroke-width="1" stroke-opacity="0.6" paint-order="stroke" >Costco Wholesale</text>
<text x="606.7" y="320.9" font-size="6.5" font-weight="400" fill="#2f95b2" textLength="37.3" lengthAdjust="spacingAndGlyphs" stroke="#fff" stroke-width="1" stroke-opacity="0.6" paint-order="stroke" >Chase Center</text>
<text x="611" y="338.9" font-size="6.5" font-weight="400" fill="#e58a35" textLength="12.7" lengthAdjust="spacingAndGlyphs" stroke="#fff" stroke-width="1" stroke-opacity="0.6" paint-order="stroke" >Plow</text>
<text x="561" y="338.4" font-size="5.2" font-weight="700" fill="#62666b" textLength="22.0" lengthAdjust="spacingAndGlyphs" stroke="#fff" stroke-width="1" stroke-opacity="0.6" paint-order="stroke" >MISSION</text>
<text x="559.8" y="344.1" font-size="5.2" font-weight="700" fill="#62666b" textLength="23.2" lengthAdjust="spacingAndGlyphs" stroke="#fff" stroke-width="1" stroke-opacity="0.6" paint-order="stroke" >DISTRICT</text>
<text x="584" y="355.4" font-size="6.8" font-weight="400" fill="#3c4043" textLength="33.0" lengthAdjust="spacingAndGlyphs" stroke="#fff" stroke-width="1" stroke-opacity="0.6" paint-order="stroke" >alud Family</text>
<text x="572" y="362.1" font-size="6.8" font-weight="400" fill="#3c4043" textLength="65.0" lengthAdjust="spacingAndGlyphs" stroke="#fff" stroke-width="1" stroke-opacity="0.6" paint-order="stroke" >Medicina Juan Posada,</text>
<text x="535.7" y="379.6" font-size="6.8" font-weight="400" fill="#3c4043" textLength="55.9" lengthAdjust="spacingAndGlyphs" stroke="#fff" stroke-width="1" stroke-opacity="0.6" paint-order="stroke" >Perfectly Seasoned</text>
<text x="518.6" y="390.8" font-size="5.2" font-weight="700" fill="#62666b" textLength="30.9" lengthAdjust="spacingAndGlyphs" stroke="#fff" stroke-width="1" stroke-opacity="0.6" paint-order="stroke" >NOE VALLEY</text>
<text x="511.4" y="350.3" font-size="5.2" font-weight="700" fill="#62666b" textLength="29.3" lengthAdjust="spacingAndGlyphs" stroke="#fff" stroke-width="1" stroke-opacity="0.6" paint-order="stroke" >THE CASTRO</text>
<text x="655.8" y="354.3" font-size="6.5" font-weight="400" fill="#2f95b2" textLength="32.6" lengthAdjust="spacingAndGlyphs" stroke="#fff" stroke-width="1" stroke-opacity="0.6" paint-order="stroke" >Museum of</text>
<text x="655.8" y="362.0" font-size="6.5" font-weight="400" fill="#2f95b2" textLength="46.2" lengthAdjust="spacingAndGlyphs" stroke="#fff" stroke-width="1" stroke-opacity="0.6" paint-order="stroke" >Craft and Design</text>
<text x="616.3" y="383.6" font-size="6.5" font-weight="400" fill="#2f95b2" textLength="34.4" lengthAdjust="spacingAndGlyphs" stroke="#fff" stroke-width="1" stroke-opacity="0.6" paint-order="stroke" >The Midway</text>
<text x="633.5" y="405.2" font-size="6.2" font-weight="400" fill="#4a7fe6" textLength="68.5" lengthAdjust="spacingAndGlyphs" stroke="#fff" stroke-width="1" stroke-opacity="0.6" paint-order="stroke" >Flora Grubb Gardens - SF</text>
<text x="666" y="417.9" font-size="6.5" font-weight="400" fill="#3f8f5c" textLength="31.0" lengthAdjust="spacingAndGlyphs" stroke="#fff" stroke-width="1" stroke-opacity="0.6" paint-order="stroke" >India Basin</text>
<text x="661" y="424.8" font-size="6.5" font-weight="400" fill="#3f8f5c" textLength="41.0" lengthAdjust="spacingAndGlyphs" stroke="#fff" stroke-width="1" stroke-opacity="0.6" paint-order="stroke" >Shoreline Park</text>
<text x="565" y="420.9" font-size="5.2" font-weight="700" fill="#62666b" textLength="44.5" lengthAdjust="spacingAndGlyphs" stroke="#fff" stroke-width="1" stroke-opacity="0.6" paint-order="stroke" >BERNAL HEIGHTS</text>
<text x="626.6" y="449.6" font-size="6.8" font-weight="400" fill="#4a7fe6" textLength="17.2" lengthAdjust="spacingAndGlyphs" stroke="#fff" stroke-width="1" stroke-opacity="0.6" paint-order="stroke" >Foods</text>
<text x="625" y="462.1" font-size="5.2" font-weight="700" fill="#62666b" textLength="22.2" lengthAdjust="spacingAndGlyphs" stroke="#fff" stroke-width="1" stroke-opacity="0.6" paint-order="stroke" >BAYVIEW</text>
<text x="563" y="455.7" font-size="6.5" font-weight="400" fill="#3f8f5c" textLength="34.5" lengthAdjust="spacingAndGlyphs" stroke="#fff" stroke-width="1" stroke-opacity="0.6" paint-order="stroke" >Louis Sutter</text>
<text x="565" y="461.8" font-size="6.5" font-weight="400" fill="#3f8f5c" textLength="31.0" lengthAdjust="spacingAndGlyphs" stroke="#fff" stroke-width="1" stroke-opacity="0.6" paint-order="stroke" >Playground</text>
<text x="535.7" y="479.0" font-size="6.5" font-weight="400" fill="#3f8f5c" textLength="42.9" lengthAdjust="spacingAndGlyphs" stroke="#fff" stroke-width="1" stroke-opacity="0.6" paint-order="stroke" >McLaren Park</text>
<text x="542.6" y="488.3" font-size="6.5" font-weight="400" fill="#3f8f5c" textLength="53.2" lengthAdjust="spacingAndGlyphs" stroke="#fff" stroke-width="1" stroke-opacity="0.6" paint-order="stroke" >John McLaren Park</text>
<text x="650.7" y="498.4" font-size="6.2" font-weight="400" fill="#3f8f5c" textLength="30.8" lengthAdjust="spacingAndGlyphs" stroke="#fff" stroke-width="1" stroke-opacity="0.6" paint-order="stroke" >Candlestick</text>
<text x="652.4" y="505.2" font-size="6.2" font-weight="400" fill="#3f8f5c" textLength="29.1" lengthAdjust="spacingAndGlyphs" stroke="#fff" stroke-width="1" stroke-opacity="0.6" paint-order="stroke" >Point State</text>
<text x="652.4" y="512.2" font-size="6.2" font-weight="400" fill="#3f8f5c" textLength="29.1" lengthAdjust="spacingAndGlyphs" stroke="#fff" stroke-width="1" stroke-opacity="0.6" paint-order="stroke" >Recreation</text>
<text x="582" y="513.6" font-size="5.2" font-weight="700" fill="#62666b" textLength="29.2" lengthAdjust="spacingAndGlyphs" stroke="#fff" stroke-width="1" stroke-opacity="0.6" paint-order="stroke" >VISITACION</text>
<text x="590.6" y="518.7" font-size="5.2" font-weight="700" fill="#62666b" textLength="20.6" lengthAdjust="spacingAndGlyphs" stroke="#fff" stroke-width="1" stroke-opacity="0.6" paint-order="stroke" >VALLEY</text>
<text x="561.5" y="392.2" font-size="4.6" font-weight="400" fill="#7c8086" textLength="34.3" lengthAdjust="spacingAndGlyphs" stroke="#fff" stroke-width="1" stroke-opacity="0.6" paint-order="stroke" >Cesar Chavez St</text>
<text x="279" y="350.3" font-size="6.5" font-weight="400" fill="#3f8f5c" textLength="37.7" lengthAdjust="spacingAndGlyphs" stroke="#fff" stroke-width="1" stroke-opacity="0.6" paint-order="stroke" >Ocean Beach</text>
<text x="364.8" y="350.3" font-size="6.5" font-weight="400" fill="#2f95b2" textLength="68.6" lengthAdjust="spacingAndGlyphs" stroke="#fff" stroke-width="1" stroke-opacity="0.6" paint-order="stroke" >16th Avenue Tiled Steps</text>
<text x="343.5" y="357.5" font-size="5.2" font-weight="700" fill="#62666b" textLength="38.5" lengthAdjust="spacingAndGlyphs" stroke="#fff" stroke-width="1" stroke-opacity="0.6" paint-order="stroke" >OUTER SUNSET</text>
<text x="333.9" y="376.7" font-size="4.6" font-weight="400" fill="#7c8086" textLength="20.6" lengthAdjust="spacingAndGlyphs" stroke="#fff" stroke-width="1" stroke-opacity="0.6" paint-order="stroke" >Noriega St</text>
<text x="478" y="358.9" font-size="6.5" font-weight="400" fill="#3f8f5c" textLength="24.0" lengthAdjust="spacingAndGlyphs" stroke="#fff" stroke-width="1" stroke-opacity="0.6" paint-order="stroke" >Tank Hill</text>
<text x="474.5" y="380.2" font-size="6.5" font-weight="400" fill="#3f8f5c" textLength="32.5" lengthAdjust="spacingAndGlyphs" stroke="#fff" stroke-width="1" stroke-opacity="0.6" paint-order="stroke" >Twin Peaks</text>
<text x="364.8" y="398.6" font-size="5.2" font-weight="700" fill="#62666b" textLength="44.6" lengthAdjust="spacingAndGlyphs" stroke="#fff" stroke-width="1" stroke-opacity="0.6" paint-order="stroke" >SUNSET DISTRICT</text>
<text x="331" y="408.4" font-size="6.8" font-weight="400" fill="#3c4043" textLength="52.6" lengthAdjust="spacingAndGlyphs" stroke="#fff" stroke-width="1" stroke-opacity="0.6" paint-order="stroke" >Pathserve Autopsy</text>
<text x="423" y="407.0" font-size="6.8" font-weight="400" fill="#3c4043" textLength="46.4" lengthAdjust="spacingAndGlyphs" stroke="#fff" stroke-width="1" stroke-opacity="0.6" paint-order="stroke" >One Martial Arts</text>
<text x="337" y="414.6" font-size="4.6" font-weight="400" fill="#7c8086" textLength="21.0" lengthAdjust="spacingAndGlyphs" stroke="#fff" stroke-width="1" stroke-opacity="0.6" paint-order="stroke" >Taraval St</text>
<text x="412.8" y="421.9" font-size="5.2" font-weight="700" fill="#62666b" textLength="36.0" lengthAdjust="spacingAndGlyphs" stroke="#fff" stroke-width="1" stroke-opacity="0.6" paint-order="stroke" >WEST PORTAL</text>
<text x="495" y="413.3" font-size="6.5" font-weight="400" fill="#3f8f5c" textLength="14.0" lengthAdjust="spacingAndGlyphs" stroke="#fff" stroke-width="1" stroke-opacity="0.6" paint-order="stroke" >Glen</text>
<text x="485" y="420.3" font-size="6.5" font-weight="400" fill="#3f8f5c" textLength="38.0" lengthAdjust="spacingAndGlyphs" stroke="#fff" stroke-width="1" stroke-opacity="0.6" paint-order="stroke" >Canyon Park</text>
<text x="285" y="439.2" font-size="6.5" font-weight="400" fill="#3f8f5c" textLength="52.0" lengthAdjust="spacingAndGlyphs" stroke="#fff" stroke-width="1" stroke-opacity="0.6" paint-order="stroke" >San Francisco Zoo</text>
<text x="385.4" y="445.2" font-size="6.2" font-weight="400" fill="#767b80" textLength="39.4" lengthAdjust="spacingAndGlyphs" stroke="#fff" stroke-width="1" stroke-opacity="0.6" paint-order="stroke" >San Francisco</text>
<text x="394" y="451.4" font-size="6.2" font-weight="400" fill="#767b80" textLength="19.0" lengthAdjust="spacingAndGlyphs" stroke="#fff" stroke-width="1" stroke-opacity="0.6" paint-order="stroke" >State</text>
<text x="390.5" y="458.0" font-size="6.2" font-weight="400" fill="#767b80" textLength="28.5" lengthAdjust="spacingAndGlyphs" stroke="#fff" stroke-width="1" stroke-opacity="0.6" paint-order="stroke" >University</text>
<text x="313.3" y="466.3" font-size="6.5" font-weight="400" fill="#3f8f5c" textLength="49.7" lengthAdjust="spacingAndGlyphs" stroke="#fff" stroke-width="1" stroke-opacity="0.6" paint-order="stroke" >TPC Harding Park</text>
<text x="366.5" y="482.0" font-size="6" font-weight="400" fill="#3f8f5c" textLength="13.7" lengthAdjust="spacingAndGlyphs" stroke="#fff" stroke-width="1" stroke-opacity="0.6" paint-order="stroke" >Lake</text>
<text x="356" y="488.8" font-size="6.2" font-weight="400" fill="#3f8f5c" textLength="34.5" lengthAdjust="spacingAndGlyphs" stroke="#fff" stroke-width="1" stroke-opacity="0.6" paint-order="stroke" >Merced Park</text>
<text x="395.7" y="494.7" font-size="5.2" font-weight="700" fill="#62666b" textLength="34.3" lengthAdjust="spacingAndGlyphs" stroke="#fff" stroke-width="1" stroke-opacity="0.6" paint-order="stroke" >PARKMERCED</text>
<text x="330.5" y="509.9" font-size="6.5" font-weight="400" fill="#3f8f5c" textLength="51.5" lengthAdjust="spacingAndGlyphs" stroke="#fff" stroke-width="1" stroke-opacity="0.6" paint-order="stroke" >The Olympic Club</text>
<text x="412.8" y="514.0" font-size="6.5" font-weight="400" fill="#4a7fe6" textLength="18.9" lengthAdjust="spacingAndGlyphs" stroke="#fff" stroke-width="1" stroke-opacity="0.6" paint-order="stroke" >H Mart</text>
<text x="484.4" y="472.4" font-size="5.2" font-weight="700" fill="#62666b" textLength="36.0" lengthAdjust="spacingAndGlyphs" stroke="#fff" stroke-width="1" stroke-opacity="0.6" paint-order="stroke" >BALBOA PARK</text>
<text x="490.6" y="488.5" font-size="5.2" font-weight="700" fill="#62666b" textLength="21.1" lengthAdjust="spacingAndGlyphs" stroke="#fff" stroke-width="1" stroke-opacity="0.6" paint-order="stroke" >CAYUGA</text>
<text x="489.4" y="494.2" font-size="5.2" font-weight="700" fill="#62666b" textLength="23.6" lengthAdjust="spacingAndGlyphs" stroke="#fff" stroke-width="1" stroke-opacity="0.6" paint-order="stroke" >TERRACE</text>
<text x="488" y="501.3" font-size="6.5" font-weight="400" fill="#3f8f5c" textLength="47.2" lengthAdjust="spacingAndGlyphs" stroke="#fff" stroke-width="1" stroke-opacity="0.6" paint-order="stroke" >Crocker Amazon</text>
<text x="495.6" y="508.0" font-size="6.5" font-weight="400" fill="#3f8f5c" textLength="38.4" lengthAdjust="spacingAndGlyphs" stroke="#fff" stroke-width="1" stroke-opacity="0.6" paint-order="stroke" >Soccer Fields</text>
<text x="505.5" y="519.8" font-size="6.2" font-weight="400" fill="#2f95b2" textLength="38.5" lengthAdjust="spacingAndGlyphs" stroke="#fff" stroke-width="1" stroke-opacity="0.6" paint-order="stroke" >Cow Palace Arena</text>
<text x="0" y="0" font-size="6.5" fill="#3a66c8" transform="translate(341,195) rotate(-33)" textLength="31" lengthAdjust="spacingAndGlyphs">Golden Gate</text>
<text x="0" y="0" font-size="4.6" fill="#7c8086" transform="translate(590,291) rotate(-55)" textLength="17" lengthAdjust="spacingAndGlyphs">Howard St</text>
<text x="0" y="0" font-size="4.6" fill="#7c8086" transform="translate(526,344) rotate(-48)" textLength="22" lengthAdjust="spacingAndGlyphs">Market St</text>
<text x="0" y="0" font-size="4.6" fill="#7c8086" transform="translate(444,464) rotate(22)" textLength="22" lengthAdjust="spacingAndGlyphs">Ocean Ave</text>
<text x="0" y="0" font-size="4.6" fill="#7c8086" transform="translate(530,466) rotate(-62)" textLength="18" lengthAdjust="spacingAndGlyphs">Mission St</text>
<text x="0" y="0" font-size="4.6" fill="#7c8086" transform="translate(366.5,391.5) rotate(-90)" textLength="24" lengthAdjust="spacingAndGlyphs">Sunset Blvd</text>
<text x="0" y="0" font-size="4.6" fill="#7c8086" transform="translate(446.5,353) rotate(90)" textLength="13" lengthAdjust="spacingAndGlyphs">29th Ave</text>
</g>
<path d="M272.6 163.53 C270.45000000000005 160.09 268.3 157.51 268.3 154.5 A4.3 4.3 0 1 1 276.90000000000003 154.5 C276.90000000000003 157.51 274.75 160.09 272.6 163.53Z" fill="#45a8c6" stroke="#fff" stroke-width="0.6"/><circle cx="272.6" cy="154.5" r="1.8059999999999998" fill="#fff" opacity="0.9"/>
<path d="M334.8 259.03 C332.65000000000003 255.59 330.5 253.01 330.5 250 A4.3 4.3 0 1 1 339.1 250 C339.1 253.01 336.95 255.59 334.8 259.03Z" fill="#45a8c6" stroke="#fff" stroke-width="0.6"/><circle cx="334.8" cy="250" r="1.8059999999999998" fill="#fff" opacity="0.9"/>
<path d="M350 264.53 C347.85 261.09 345.7 258.51 345.7 255.5 A4.3 4.3 0 1 1 354.3 255.5 C354.3 258.51 352.15 261.09 350 264.53Z" fill="#3f9d5c" stroke="#fff" stroke-width="0.6"/><circle cx="350" cy="255.5" r="1.8059999999999998" fill="#fff" opacity="0.9"/>
<path d="M326.3 285.03 C324.15000000000003 281.59 322.0 279.01 322.0 276 A4.3 4.3 0 1 1 330.6 276 C330.6 279.01 328.45 281.59 326.3 285.03Z" fill="#e4527b" stroke="#fff" stroke-width="0.6"/><circle cx="326.3" cy="276" r="1.8059999999999998" fill="#fff" opacity="0.9"/>
<path d="M326.3 319.03 C324.15000000000003 315.59 322.0 313.01 322.0 310 A4.3 4.3 0 1 1 330.6 310 C330.6 313.01 328.45 315.59 326.3 319.03Z" fill="#3f9d5c" stroke="#fff" stroke-width="0.6"/><circle cx="326.3" cy="310" r="1.8059999999999998" fill="#fff" opacity="0.9"/>
<path d="M356 319.03 C353.85 315.59 351.7 313.01 351.7 310 A4.3 4.3 0 1 1 360.3 310 C360.3 313.01 358.15 315.59 356 319.03Z" fill="#3f9d5c" stroke="#fff" stroke-width="0.6"/><circle cx="356" cy="310" r="1.8059999999999998" fill="#fff" opacity="0.9"/>
<path d="M388 319.03 C385.85 315.59 383.7 313.01 383.7 310 A4.3 4.3 0 1 1 392.3 310 C392.3 313.01 390.15 315.59 388 319.03Z" fill="#45a8c6" stroke="#fff" stroke-width="0.6"/><circle cx="388" cy="310" r="1.8059999999999998" fill="#fff" opacity="0.9"/>
<path d="M441.7 319.03 C439.55 315.59 437.4 313.01 437.4 310 A4.3 4.3 0 1 1 446.0 310 C446.0 313.01 443.84999999999997 315.59 441.7 319.03Z" fill="#45a8c6" stroke="#fff" stroke-width="0.6"/><circle cx="441.7" cy="310" r="1.8059999999999998" fill="#fff" opacity="0.9"/>
<path d="M513 195.03 C510.85 191.59 508.7 189.01 508.7 186 A4.3 4.3 0 1 1 517.3 186 C517.3 189.01 515.15 191.59 513 195.03Z" fill="#3f9d5c" stroke="#fff" stroke-width="0.6"/><circle cx="513" cy="186" r="1.8059999999999998" fill="#fff" opacity="0.9"/>
<path d="M489.2 205.03 C487.05 201.59 484.9 199.01 484.9 196 A4.3 4.3 0 1 1 493.5 196 C493.5 199.01 491.34999999999997 201.59 489.2 205.03Z" fill="#45a8c6" stroke="#fff" stroke-width="0.6"/><circle cx="489.2" cy="196" r="1.8059999999999998" fill="#fff" opacity="0.9"/>
<path d="M542.2 192.03 C540.0500000000001 188.59 537.9000000000001 186.01 537.9000000000001 183 A4.3 4.3 0 1 1 546.5 183 C546.5 186.01 544.35 188.59 542.2 192.03Z" fill="#e4527b" stroke="#fff" stroke-width="0.6"/><circle cx="542.2" cy="183" r="1.8059999999999998" fill="#fff" opacity="0.9"/>
<path d="M563.6 190.03 C561.45 186.59 559.3000000000001 184.01 559.3000000000001 181 A4.3 4.3 0 1 1 567.9 181 C567.9 184.01 565.75 186.59 563.6 190.03Z" fill="#e4527b" stroke="#fff" stroke-width="0.6"/><circle cx="563.6" cy="181" r="1.8059999999999998" fill="#fff" opacity="0.9"/>
<path d="M581.3 202.03 C579.15 198.59 577.0 196.01 577.0 193 A4.3 4.3 0 1 1 585.5999999999999 193 C585.5999999999999 196.01 583.4499999999999 198.59 581.3 202.03Z" fill="#e4527b" stroke="#fff" stroke-width="0.6"/><circle cx="581.3" cy="193" r="1.8059999999999998" fill="#fff" opacity="0.9"/>
<path d="M591.5 186.53 C589.35 183.09 587.2 180.51 587.2 177.5 A4.3 4.3 0 1 1 595.8 177.5 C595.8 180.51 593.65 183.09 591.5 186.53Z" fill="#45a8c6" stroke="#fff" stroke-width="0.6"/><circle cx="591.5" cy="177.5" r="1.8059999999999998" fill="#fff" opacity="0.9"/>
<path d="M677 222.03 C674.85 218.59 672.7 216.01 672.7 213 A4.3 4.3 0 1 1 681.3 213 C681.3 216.01 679.15 218.59 677 222.03Z" fill="#6f7479" stroke="#fff" stroke-width="0.6"/><circle cx="677" cy="213" r="1.8059999999999998" fill="#fff" opacity="0.9"/>
<path d="M615.3 264.03 C613.15 260.59 611.0 258.01 611.0 255 A4.3 4.3 0 1 1 619.5999999999999 255 C619.5999999999999 258.01 617.4499999999999 260.59 615.3 264.03Z" fill="#45a8c6" stroke="#fff" stroke-width="0.6"/><circle cx="615.3" cy="255" r="1.8059999999999998" fill="#fff" opacity="0.9"/>
<path d="M588.8 253.03 C586.65 249.59 584.5 247.01 584.5 244 A4.3 4.3 0 1 1 593.0999999999999 244 C593.0999999999999 247.01 590.9499999999999 249.59 588.8 253.03Z" fill="#e4527b" stroke="#fff" stroke-width="0.6"/><circle cx="588.8" cy="244" r="1.8059999999999998" fill="#fff" opacity="0.9"/>
<path d="M567.7 275.03 C565.5500000000001 271.59 563.4000000000001 269.01 563.4000000000001 266 A4.3 4.3 0 1 1 572.0 266 C572.0 269.01 569.85 271.59 567.7 275.03Z" fill="#e4527b" stroke="#fff" stroke-width="0.6"/><circle cx="567.7" cy="266" r="1.8059999999999998" fill="#fff" opacity="0.9"/>
<path d="M645.8 288.53 C643.65 285.09 641.5 282.51 641.5 279.5 A4.3 4.3 0 1 1 650.0999999999999 279.5 C650.0999999999999 282.51 647.9499999999999 285.09 645.8 288.53Z" fill="#3f9d5c" stroke="#fff" stroke-width="0.6"/><circle cx="645.8" cy="279.5" r="1.8059999999999998" fill="#fff" opacity="0.9"/>
<path d="M605.7 310.53 C603.5500000000001 307.09 601.4000000000001 304.51 601.4000000000001 301.5 A4.3 4.3 0 1 1 610.0 301.5 C610.0 304.51 607.85 307.09 605.7 310.53Z" fill="#4b84ea" stroke="#fff" stroke-width="0.6"/><circle cx="605.7" cy="301.5" r="1.8059999999999998" fill="#fff" opacity="0.9"/>
<path d="M588.8 317.53 C586.65 314.09 584.5 311.51 584.5 308.5 A4.3 4.3 0 1 1 593.0999999999999 308.5 C593.0999999999999 311.51 590.9499999999999 314.09 588.8 317.53Z" fill="#4b84ea" stroke="#fff" stroke-width="0.6"/><circle cx="588.8" cy="308.5" r="1.8059999999999998" fill="#fff" opacity="0.9"/>
<path d="M649.2 324.03 C647.0500000000001 320.59 644.9000000000001 318.01 644.9000000000001 315 A4.3 4.3 0 1 1 653.5 315 C653.5 318.01 651.35 320.59 649.2 324.03Z" fill="#45a8c6" stroke="#fff" stroke-width="0.6"/><circle cx="649.2" cy="315" r="1.8059999999999998" fill="#fff" opacity="0.9"/>
<path d="M628.8 341.03 C626.65 337.59 624.5 335.01 624.5 332 A4.3 4.3 0 1 1 633.0999999999999 332 C633.0999999999999 335.01 630.9499999999999 337.59 628.8 341.03Z" fill="#f0993a" stroke="#fff" stroke-width="0.6"/><circle cx="628.8" cy="332" r="1.8059999999999998" fill="#fff" opacity="0.9"/>
<path d="M323 355.03 C320.85 351.59 318.7 349.01 318.7 346 A4.3 4.3 0 1 1 327.3 346 C327.3 349.01 325.15 351.59 323 355.03Z" fill="#3f9d5c" stroke="#fff" stroke-width="0.6"/><circle cx="323" cy="346" r="1.8059999999999998" fill="#fff" opacity="0.9"/>
<path d="M422.4 366.03 C420.25 362.59 418.09999999999997 360.01 418.09999999999997 357 A4.3 4.3 0 1 1 426.7 357 C426.7 360.01 424.54999999999995 362.59 422.4 366.03Z" fill="#45a8c6" stroke="#fff" stroke-width="0.6"/><circle cx="422.4" cy="357" r="1.8059999999999998" fill="#fff" opacity="0.9"/>
<path d="M490 351.53 C487.85 348.09 485.7 345.51 485.7 342.5 A4.3 4.3 0 1 1 494.3 342.5 C494.3 345.51 492.15 348.09 490 351.53Z" fill="#3f9d5c" stroke="#fff" stroke-width="0.6"/><circle cx="490" cy="342.5" r="1.8059999999999998" fill="#fff" opacity="0.9"/>
<path d="M343.5 443.03 C341.35 439.59 339.2 437.01 339.2 434 A4.3 4.3 0 1 1 347.8 434 C347.8 437.01 345.65 439.59 343.5 443.03Z" fill="#3f9d5c" stroke="#fff" stroke-width="0.6"/><circle cx="343.5" cy="434" r="1.8059999999999998" fill="#fff" opacity="0.9"/>
<path d="M369.2 469.03 C367.05 465.59 364.9 463.01 364.9 460 A4.3 4.3 0 1 1 373.5 460 C373.5 463.01 371.34999999999997 465.59 369.2 469.03Z" fill="#3f9d5c" stroke="#fff" stroke-width="0.6"/><circle cx="369.2" cy="460" r="1.8059999999999998" fill="#fff" opacity="0.9"/>
<path d="M405 472.53 C402.85 469.09 400.7 466.51 400.7 463.5 A4.3 4.3 0 1 1 409.3 463.5 C409.3 466.51 407.15 469.09 405 472.53Z" fill="#6f7479" stroke="#fff" stroke-width="0.6"/><circle cx="405" cy="463.5" r="1.8059999999999998" fill="#fff" opacity="0.9"/>
<path d="M369.2 523.03 C367.05 519.59 364.9 517.01 364.9 514 A4.3 4.3 0 1 1 373.5 514 C373.5 517.01 371.34999999999997 519.59 369.2 523.03Z" fill="#3f9d5c" stroke="#fff" stroke-width="0.6"/><circle cx="369.2" cy="514" r="1.8059999999999998" fill="#fff" opacity="0.9"/>
<path d="M438.5 518.03 C436.35 514.59 434.2 512.01 434.2 509 A4.3 4.3 0 1 1 442.8 509 C442.8 512.01 440.65 514.59 438.5 518.03Z" fill="#4b84ea" stroke="#fff" stroke-width="0.6"/><circle cx="438.5" cy="509" r="1.8059999999999998" fill="#fff" opacity="0.9"/>
<path d="M540.7 508.03 C538.5500000000001 504.59 536.4000000000001 502.01 536.4000000000001 499 A4.3 4.3 0 1 1 545.0 499 C545.0 502.01 542.85 504.59 540.7 508.03Z" fill="#3f9d5c" stroke="#fff" stroke-width="0.6"/><circle cx="540.7" cy="499" r="1.8059999999999998" fill="#fff" opacity="0.9"/>
<path d="M580.6 476.03 C578.45 472.59 576.3000000000001 470.01 576.3000000000001 467 A4.3 4.3 0 1 1 584.9 467 C584.9 470.01 582.75 472.59 580.6 476.03Z" fill="#3f9d5c" stroke="#fff" stroke-width="0.6"/><circle cx="580.6" cy="467" r="1.8059999999999998" fill="#fff" opacity="0.9"/>
<path d="M649 363.53 C646.85 360.09 644.7 357.51 644.7 354.5 A4.3 4.3 0 1 1 653.3 354.5 C653.3 357.51 651.15 360.09 649 363.53Z" fill="#45a8c6" stroke="#fff" stroke-width="0.6"/><circle cx="649" cy="354.5" r="1.8059999999999998" fill="#fff" opacity="0.9"/>
<path d="M655.8 387.53 C653.65 384.09 651.5 381.51 651.5 378.5 A4.3 4.3 0 1 1 660.0999999999999 378.5 C660.0999999999999 381.51 657.9499999999999 384.09 655.8 387.53Z" fill="#45a8c6" stroke="#fff" stroke-width="0.6"/><circle cx="655.8" cy="378.5" r="1.8059999999999998" fill="#fff" opacity="0.9"/>
<path d="M643.8 420.03 C641.65 416.59 639.5 414.01 639.5 411 A4.3 4.3 0 1 1 648.0999999999999 411 C648.0999999999999 414.01 645.9499999999999 416.59 643.8 420.03Z" fill="#4b84ea" stroke="#fff" stroke-width="0.6"/><circle cx="643.8" cy="411" r="1.8059999999999998" fill="#fff" opacity="0.9"/>
<path d="M681.5 440.53 C679.35 437.09 677.2 434.51 677.2 431.5 A4.3 4.3 0 1 1 685.8 431.5 C685.8 434.51 683.65 437.09 681.5 440.53Z" fill="#3f9d5c" stroke="#fff" stroke-width="0.6"/><circle cx="681.5" cy="431.5" r="1.8059999999999998" fill="#fff" opacity="0.9"/>
<path d="M621.5 453.53 C619.35 450.09 617.2 447.51 617.2 444.5 A4.3 4.3 0 1 1 625.8 444.5 C625.8 447.51 623.65 450.09 621.5 453.53Z" fill="#4b84ea" stroke="#fff" stroke-width="0.6"/><circle cx="621.5" cy="444.5" r="1.8059999999999998" fill="#fff" opacity="0.9"/>
<path d="M515.8 336.53 C513.65 333.09 511.49999999999994 330.51 511.49999999999994 327.5 A4.3 4.3 0 1 1 520.0999999999999 327.5 C520.0999999999999 330.51 517.9499999999999 333.09 515.8 336.53Z" fill="#45a8c6" stroke="#fff" stroke-width="0.6"/><circle cx="515.8" cy="327.5" r="1.8059999999999998" fill="#fff" opacity="0.9"/>
<rect x="403.45" y="276.35" width="8.5" height="8.5" rx="1" fill="#6f7479"/><circle cx="407.7" cy="280.6" r="1.3" fill="#fff"/>
<rect x="412.75" y="400.35" width="8.5" height="8.5" rx="1" fill="#6f7479"/><circle cx="417" cy="404.6" r="1.3" fill="#fff"/>
<rect x="527.05" y="372.95" width="8.5" height="8.5" rx="1" fill="#4b84ea"/><circle cx="531.3" cy="377.2" r="1.3" fill="#fff"/>
<rect x="628.5" y="292.9" width="5" height="5" rx="1" fill="#4b84ea"/><circle cx="631" cy="295.4" r="1.3" fill="#fff"/>
<rect x="558.2" y="248.2" width="7.6" height="7.6" rx="0.8" fill="#e8675b"/><text x="562" y="254.6" font-family="Liberation Sans" font-size="7" font-weight="700" fill="#fff" text-anchor="middle">H</text>
<rect x="385.7" y="402.2" width="7.6" height="7.6" rx="0.8" fill="#e8675b"/><text x="389.5" y="408.6" font-family="Liberation Sans" font-size="7" font-weight="700" fill="#fff" text-anchor="middle">H</text>
<rect x="562.2" y="352.8" width="7.6" height="7.6" rx="0.8" fill="#e8675b"/><text x="566" y="359.20000000000005" font-family="Liberation Sans" font-size="7" font-weight="700" fill="#fff" text-anchor="middle">H</text>
<path d="M431.5 205.1 H438.5 V208.6 Q438.5 210.6 435 210.9 Q431.5 210.6 431.5 208.6Z" fill="#fff" stroke="#8a8f94" stroke-width="0.5"/><text x="435" y="209.0" font-family="Liberation Sans" font-size="3.6" fill="#555" text-anchor="middle">101</text>
<path d="M517.5 214.2 H524.5 V217.7 Q524.5 219.7 521 220.0 Q517.5 219.7 517.5 217.7Z" fill="#fff" stroke="#8a8f94" stroke-width="0.5"/><text x="521" y="218.1" font-family="Liberation Sans" font-size="3.6" fill="#555" text-anchor="middle">101</text>
<path d="M602.5 339.4 H609.5 V342.9 Q609.5 344.9 606 345.2 Q602.5 344.9 602.5 342.9Z" fill="#fff" stroke="#8a8f94" stroke-width="0.5"/><text x="606" y="343.29999999999995" font-family="Liberation Sans" font-size="3.6" fill="#555" text-anchor="middle">101</text>
<path d="M597.5 389.1 H604.5 V392.6 Q604.5 394.6 601 394.90000000000003 Q597.5 394.6 597.5 392.6Z" fill="#fff" stroke="#8a8f94" stroke-width="0.5"/><text x="601" y="393.0" font-family="Liberation Sans" font-size="3.6" fill="#555" text-anchor="middle">101</text>
<path d="M597.5 438.8 H604.5 V442.3 Q604.5 444.3 601 444.6 Q597.5 444.3 597.5 442.3Z" fill="#fff" stroke="#8a8f94" stroke-width="0.5"/><text x="601" y="442.7" font-family="Liberation Sans" font-size="3.6" fill="#555" text-anchor="middle">101</text>
<path d="M668.4 226.2 H674.4 V229.2 Q674.4 231.7 671.4 232.2 Q668.4 231.7 668.4 229.2Z" fill="#3f6fd0" stroke="#fff" stroke-width="0.5"/><rect x="668.4" y="226.2" width="6" height="1.4" fill="#d9534f"/>
<path d="M510 449.5 H516 V452.5 Q516 455 513 455.5 Q510 455 510 452.5Z" fill="#3f6fd0" stroke="#fff" stroke-width="0.5"/><rect x="510" y="449.5" width="6" height="1.4" fill="#d9534f"/>
<path d="M603 426.8 H609 V429.8 Q609 432.3 606 432.8 Q603 432.3 603 429.8Z" fill="#3f6fd0" stroke="#fff" stroke-width="0.5"/><rect x="603" y="426.8" width="6" height="1.4" fill="#d9534f"/>
<path d="M453 513.5 H459 V516.5 Q459 519 456 519.5 Q453 519 453 516.5Z" fill="#3f6fd0" stroke="#fff" stroke-width="0.5"/><rect x="453" y="513.5" width="6" height="1.4" fill="#d9534f"/>
<path d="M601 325.9 H607 V328.9 Q607 331.4 604 331.9 Q601 331.4 601 328.9Z" fill="#3f6fd0" stroke="#fff" stroke-width="0.5"/><rect x="601" y="325.9" width="6" height="1.4" fill="#d9534f"/>
<circle cx="500" cy="311.3" r="6.3" fill="#000" opacity="0.12"/><circle cx="500" cy="310.7" r="5.8" fill="#fff"/><circle cx="500" cy="310.7" r="4.7" fill="#1a6ff0"/>
<circle cx="509.8" cy="342.6" r="6.3" fill="#000" opacity="0.12"/><circle cx="509.8" cy="342" r="5.8" fill="#fff"/><circle cx="509.8" cy="342" r="4.7" fill="#1a6ff0"/>
<circle cx="502.6" cy="351.0" r="6.3" fill="#000" opacity="0.12"/><circle cx="502.6" cy="350.4" r="5.8" fill="#fff"/><circle cx="502.6" cy="350.4" r="4.7" fill="#1a6ff0"/>
<circle cx="577" cy="303.1" r="6.3" fill="#000" opacity="0.12"/><circle cx="577" cy="302.5" r="5.8" fill="#fff"/><circle cx="577" cy="302.5" r="4.7" fill="#1a6ff0"/>
<circle cx="602.8" cy="273.90000000000003" r="6.3" fill="#000" opacity="0.12"/><circle cx="602.8" cy="273.3" r="5.8" fill="#fff"/><circle cx="602.8" cy="273.3" r="4.7" fill="#1a6ff0"/>
<circle cx="592.4" cy="342.6" r="6.3" fill="#000" opacity="0.12"/><circle cx="592.4" cy="342" r="5.8" fill="#fff"/><circle cx="592.4" cy="342" r="4.7" fill="#1a6ff0"/>
<circle cx="579.6" cy="353.3" r="6.3" fill="#000" opacity="0.12"/><circle cx="579.6" cy="352.7" r="5.8" fill="#fff"/><circle cx="579.6" cy="352.7" r="4.7" fill="#1a6ff0"/>
<circle cx="598" cy="363.20000000000005" r="6.3" fill="#000" opacity="0.12"/><circle cx="598" cy="362.6" r="5.8" fill="#fff"/><circle cx="598" cy="362.6" r="4.7" fill="#1a6ff0"/>
<circle cx="528.3" cy="404.90000000000003" r="6.3" fill="#000" opacity="0.12"/><circle cx="528.3" cy="404.3" r="5.8" fill="#fff"/><circle cx="528.3" cy="404.3" r="4.7" fill="#1a6ff0"/>
<circle cx="540.7" cy="417.1" r="6.3" fill="#000" opacity="0.12"/><circle cx="540.7" cy="416.5" r="5.8" fill="#fff"/><circle cx="540.7" cy="416.5" r="4.7" fill="#1a6ff0"/>
<circle cx="582.3" cy="479.0" r="6.3" fill="#000" opacity="0.12"/><circle cx="582.3" cy="478.4" r="5.8" fill="#fff"/><circle cx="582.3" cy="478.4" r="4.7" fill="#1a6ff0"/>
<circle cx="641" cy="472.1" r="6.3" fill="#000" opacity="0.12"/><circle cx="641" cy="471.5" r="5.8" fill="#fff"/><circle cx="641" cy="471.5" r="4.7" fill="#1a6ff0"/>
<rect x="735.5" y="470" width="16.5" height="14.4" rx="3" fill="#fff"/>
<rect x="735.5" y="489" width="16.5" height="14.4" rx="3" fill="#fff"/>
<path d="M740 477.2 H747.5 M743.75 473.5 V481" stroke="#2a6fd6" stroke-width="1.3"/>
<path d="M740 496.2 H747.5" stroke="#2a6fd6" stroke-width="1.3"/>
</svg>
  </div>
</div>
</body></html>
